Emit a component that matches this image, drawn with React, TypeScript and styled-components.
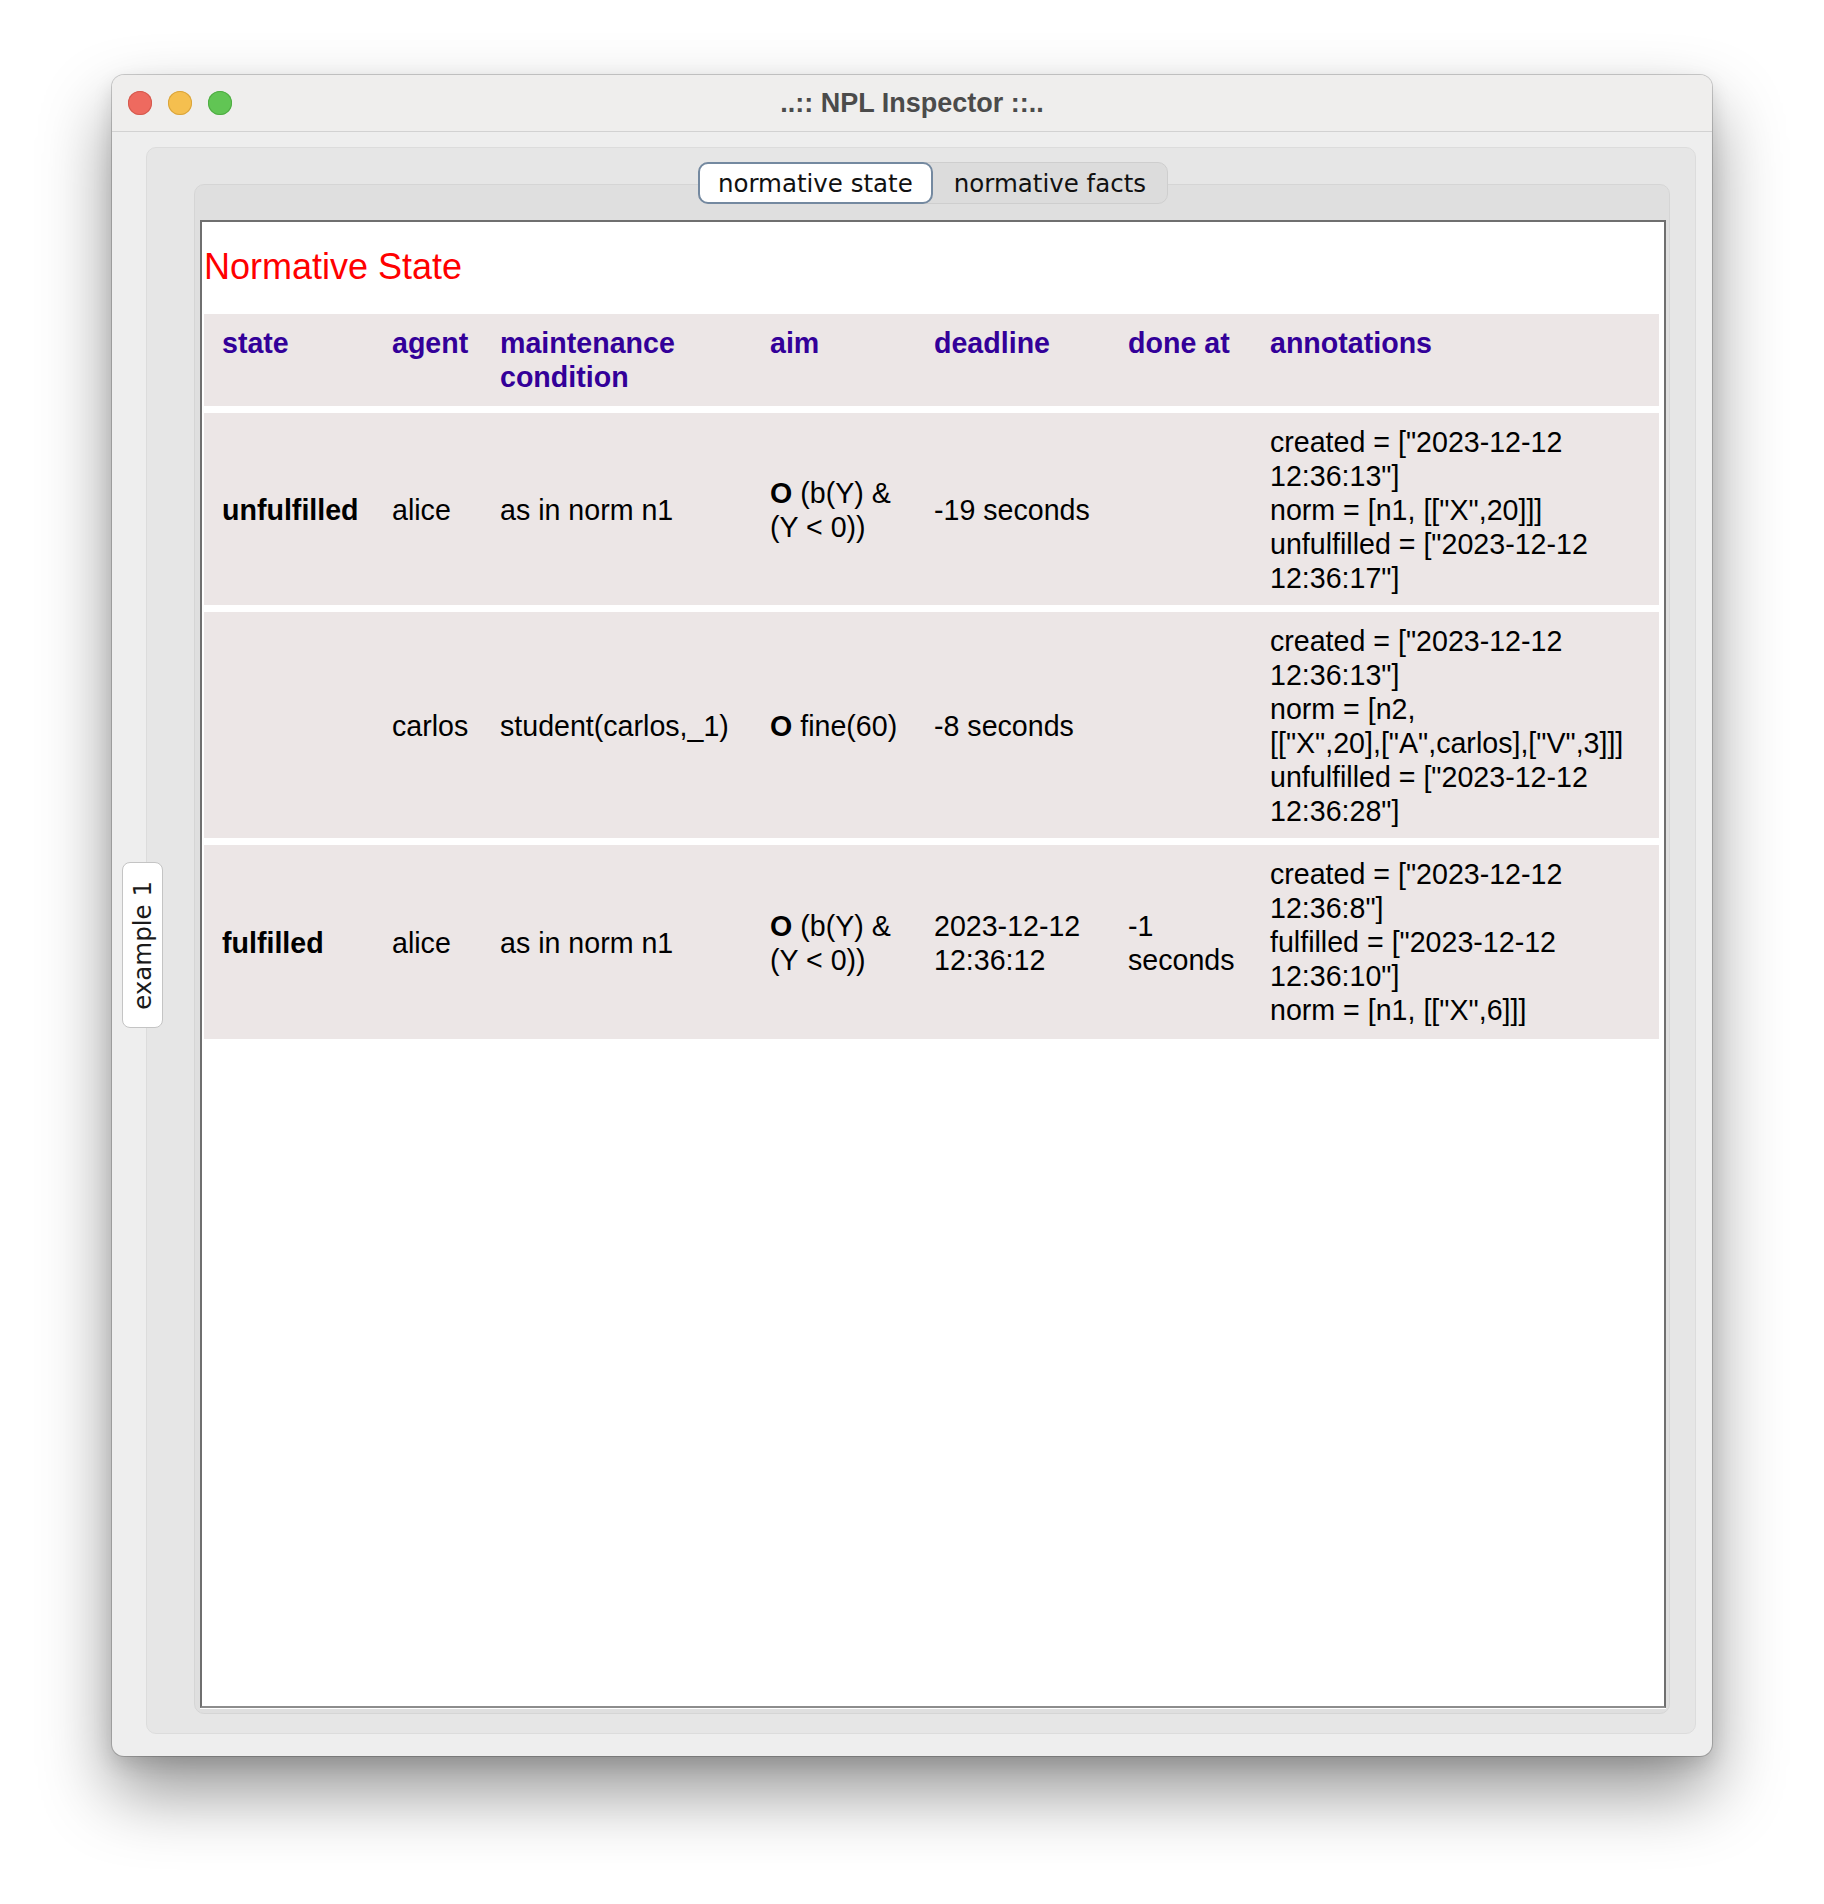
import React from "react";
import styled, { createGlobalStyle } from "styled-components";

const Global = createGlobalStyle`
  html, body { margin: 0; padding: 0; background: #ffffff; }
  body { font-family: "Liberation Sans", Arial, sans-serif; }
`;

const Page = styled.div`
  width: 1824px;
  height: 1904px;
  padding: 75px 0 0 112px;
  box-sizing: border-box;
`;

const Window = styled.div`
  width: 1600px;
  height: 1681px;
  border-radius: 12px;
  background: #eeeeee;
  box-shadow: 0 0 0 1px rgba(0, 0, 0, 0.18), 0 36px 70px rgba(0, 0, 0, 0.42),
    0 8px 20px rgba(0, 0, 0, 0.12);
  display: flex;
  flex-direction: column;
  overflow: hidden;
`;

const TitleBar = styled.div`
  height: 56px;
  flex: none;
  background: #efeeed;
  border-bottom: 1px solid #d2d2d2;
  display: grid;
  grid-template-columns: 1fr auto 1fr;
  align-items: center;
`;

const Lights = styled.div`
  display: flex;
  gap: 16px;
  padding-left: 16px;
`;

const Light = styled.span<{ $fill: string; $edge: string }>`
  width: 24px;
  height: 24px;
  border-radius: 50%;
  background: ${(p) => p.$fill};
  box-shadow: inset 0 0 0 1px ${(p) => p.$edge};
`;

const Title = styled.div`
  font-family: "Liberation Sans", Arial, sans-serif;
  font-weight: bold;
  font-size: 27px;
  color: #4b4b4b;
  white-space: nowrap;
`;

const Body = styled.div`
  flex: 1;
  display: flex;
  padding: 15px 16px 22px 34px;
  min-height: 0;
`;

const OuterPanel = styled.div`
  flex: 1;
  display: flex;
  align-items: center;
  background: #e6e6e6;
  border: 1px solid #dcdcdc;
  border-radius: 10px;
  padding: 36px 25px 19px 0;
`;

const SideTab = styled.div`
  flex: none;
  margin-left: -25px;
  margin-top: -8px;
  width: 39px;
  height: 164px;
  background: #ffffff;
  border: 1px solid #c4c4c4;
  border-radius: 8px;
  display: flex;
  align-items: center;
  justify-content: center;
  box-sizing: content-box;
`;

const SideTabLabel = styled.span`
  writing-mode: vertical-rl;
  transform: rotate(180deg);
  font-family: "DejaVu Sans", sans-serif;
  font-size: 24.5px;
  color: #1a1a1a;
  white-space: nowrap;
`;

const TabPanel = styled.div`
  flex: 1;
  align-self: stretch;
  margin-left: 31px;
  display: flex;
  flex-direction: column;
  background: #dfdfdf;
  border: 1px solid #d5d5d5;
  border-radius: 10px;
  padding: 0 3px 5px 5px;
`;

const TabStrip = styled.div`
  display: flex;
  justify-content: center;
  margin-top: -23px;
  height: 42px;
  flex: none;
`;

const TabGroup = styled.div`
  display: flex;
  background: #dcdcdc;
  border: 1px solid #cecece;
  border-radius: 10px;
`;

const Tab = styled.div<{ $active?: boolean }>`
  display: flex;
  align-items: center;
  padding: 0 ${(p) => (p.$active ? "18px" : "21px")};
  margin: ${(p) => (p.$active ? "-1px 0 -1px -1px" : "0")};
  font-family: "DejaVu Sans", sans-serif;
  font-size: 24.5px;
  color: #111111;
  white-space: nowrap;
  background: ${(p) => (p.$active ? "#ffffff" : "transparent")};
  border: ${(p) => (p.$active ? "2px solid #7489a0" : "none")};
  border-radius: 10px;
`;

const Content = styled.div`
  flex: 1;
  margin-top: 16px;
  background: #ffffff;
  border: 2px solid #6f6f6f;
  border-bottom-color: #8d8d8d;
  padding: 0 5px 0 2px;
  box-shadow: 0 1px 0 #ffffff;
`;

const Heading = styled.h1`
  margin: 0;
  padding-top: 24px;
  margin-bottom: 26px;
  font-family: "Liberation Sans", Arial, sans-serif;
  font-weight: normal;
  font-size: 36px;
  line-height: 42px;
  color: #ff0000;
`;

const Table = styled.div`
  display: flex;
  flex-direction: column;
  gap: 7px;
`;

const Row = styled.div<{ $head?: boolean }>`
  display: grid;
  grid-template-columns: 170px 108px 270px 164px 194px 142px 1fr;
  align-items: ${(p) => (p.$head ? "start" : "center")};
  padding-left: 18px;
  background: #ece6e6;
  font-family: "Liberation Sans", Arial, sans-serif;
  font-size: 28.6px;
  line-height: 34px;
`;

const HeadCell = styled.div`
  padding: 12px 16px 12px 0;
  font-weight: bold;
  color: #330099;
`;

const Cell = styled.div<{ $bold?: boolean; $tall?: boolean }>`
  padding: ${(p) => (p.$tall ? "12px 16px 12px 0" : "12px 16px 10px 0")};
  color: #000000;
  font-weight: ${(p) => (p.$bold ? "bold" : "normal")};
`;

const Op = styled.b`
  font-weight: bold;
`;

const Line = styled.div``;

const Word = styled.span`
  white-space: nowrap;
`;

type Obligation = {
  state: string;
  agent: string;
  cond: string;
  aim: string;
  deadline: string;
  done: string;
  notes: string[];
};

const rows: Obligation[] = [
  {
    state: "unfulfilled",
    agent: "alice",
    cond: "as in norm n1",
    aim: "(b(Y) & (Y < 0))",
    deadline: "-19 seconds",
    done: "",
    notes: [
      'created = ["2023-12-12 12:36:13"]',
      'norm = [n1, [["X",20]]]',
      'unfulfilled = ["2023-12-12 12:36:17"]',
    ],
  },
  {
    state: "",
    agent: "carlos",
    cond: "student(carlos,_1)",
    aim: "fine(60)",
    deadline: "-8 seconds",
    done: "",
    notes: [
      'created = ["2023-12-12 12:36:13"]',
      'norm = [n2, [["X",20],["A",carlos],["V",3]]]',
      'unfulfilled = ["2023-12-12 12:36:28"]',
    ],
  },
  {
    state: "fulfilled",
    agent: "alice",
    cond: "as in norm n1",
    aim: "(b(Y) & (Y < 0))",
    deadline: "2023-12-12 12:36:12",
    done: "-1 seconds",
    notes: [
      'created = ["2023-12-12 12:36:8"]',
      'fulfilled = ["2023-12-12 12:36:10"]',
      'norm = [n1, [["X",6]]]',
    ],
  },
];

const heads = ["state", "agent", "maintenance condition", "aim", "deadline", "done at", "annotations"];

function Note({ text }: { text: string }) {
  const words = text.split(" ");
  return (
    <Line>
      {words.map((w, i) => (
        <React.Fragment key={i}>
          <Word>{w}</Word>
          {i < words.length - 1 ? " " : null}
        </React.Fragment>
      ))}
    </Line>
  );
}

export default function App() {
  return (
    <Page>
      <Global />
      <Window>
        <TitleBar>
          <Lights>
            <Light $fill="#ee6a5f" $edge="#d45a4f" />
            <Light $fill="#f5bf4f" $edge="#d9a43c" />
            <Light $fill="#61c554" $edge="#4fac43" />
          </Lights>
          <Title>..:: NPL Inspector ::..</Title>
          <div />
        </TitleBar>
        <Body>
          <OuterPanel>
            <SideTab>
              <SideTabLabel>example 1</SideTabLabel>
            </SideTab>
            <TabPanel>
              <TabStrip>
                <TabGroup>
                  <Tab $active>normative state</Tab>
                  <Tab>normative facts</Tab>
                </TabGroup>
              </TabStrip>
              <Content>
                <Heading>Normative State</Heading>
                <Table>
                  <Row $head>
                    {heads.map((h) => (
                      <HeadCell key={h}>{h}</HeadCell>
                    ))}
                  </Row>
                  {rows.map((r, i) => (
                    <Row key={i}>
                      <Cell $bold>{r.state}</Cell>
                      <Cell>{r.agent}</Cell>
                      <Cell>{r.cond}</Cell>
                      <Cell>
                        <Op>O</Op> {r.aim}
                      </Cell>
                      <Cell>{r.deadline}</Cell>
                      <Cell>{r.done}</Cell>
                      <Cell $tall={i === 2}>
                        {r.notes.map((n) => (
                          <Note key={n} text={n} />
                        ))}
                      </Cell>
                    </Row>
                  ))}
                </Table>
              </Content>
            </TabPanel>
          </OuterPanel>
        </Body>
      </Window>
    </Page>
  );
}
